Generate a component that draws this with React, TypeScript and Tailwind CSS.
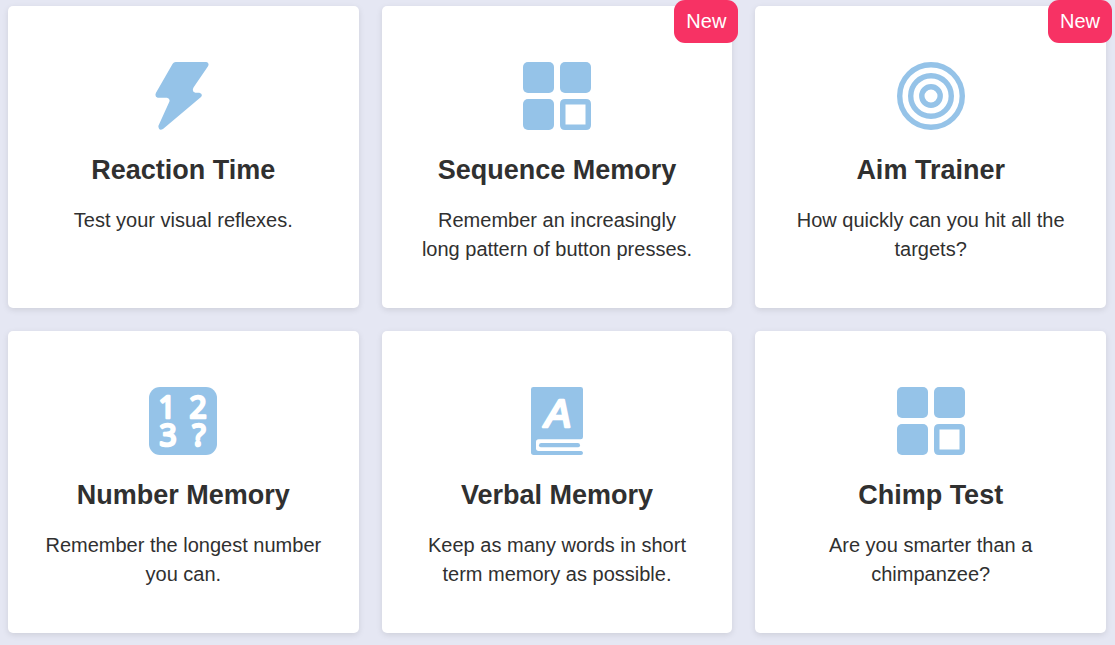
import type { ReactNode } from "react";

const BoltIcon = () => (
  <svg viewBox="30 36 204 204" className="size-[68px] text-[#95c3e8]" fill="currentColor" aria-hidden="true">
    <path d="M110 36H202Q212 38 207 49L164 112Q157 125 169 128H181Q193 132 186 141L72 237Q59 244 58 228L91 155Q94 145 84 143H56Q46 140 51 128L101 41Q104 36 110 36Z" />
  </svg>
);

const TilesIcon = () => (
  <svg viewBox="0 0 68 68" className="size-[68px] text-[#95c3e8]" fill="currentColor" aria-hidden="true">
    <rect width="31" height="31" rx="5" />
    <rect x="37" width="31" height="31" rx="5" />
    <rect y="37" width="31" height="31" rx="5" />
    <path fillRule="evenodd" d="M42 37H63Q68 37 68 42V63Q68 68 63 68H42Q37 68 37 63V42Q37 37 42 37ZM42.5 42.5V62.5H62.5V42.5Z" />
  </svg>
);

const TargetIcon = () => (
  <svg viewBox="0 0 68 68" className="size-[68px] text-[#95c3e8]" fill="none" stroke="currentColor" strokeWidth="5.4" aria-hidden="true">
    <circle cx="34" cy="34" r="31.3" />
    <circle cx="34" cy="34" r="20.3" />
    <circle cx="34" cy="34" r="9.2" />
  </svg>
);

const NumbersIcon = () => (
  <svg viewBox="0 0 68 68" className="size-[68px] overflow-visible text-[#95c3e8]" aria-hidden="true">
    <rect width="68" height="68" rx="11" fill="currentColor" />
    <g fill="white" stroke="white" strokeWidth="2.5" strokeLinejoin="round" textAnchor="middle" className="font-['Noto_Sans',sans-serif] text-[30px]">
      <text x="18" y="31">1</text>
      <text x="49" y="31">2</text>
      <text x="19" y="59">3</text>
      <text x="50" y="59">?</text>
    </g>
  </svg>
);

const BookIcon = () => (
  <svg viewBox="33 33 204 204" className="size-[68px] text-[#95c3e8]" aria-hidden="true">
    <path
      fill="currentColor"
      d="M64 33H206Q213 33 213 40V183Q213 190 206 190H80Q72 190 72 198V217Q72 225 80 225H208Q213 226 213 231Q213 237 207 237H65Q57 237 57 229V40Q57 33 64 33Z"
    />
    <rect x="81" y="201" width="123" height="13" rx="6.5" fill="currentColor" />
    <text
      x="138"
      y="153"
      textAnchor="middle"
      fill="white"
      stroke="white"
      strokeWidth="8"
      strokeLinejoin="round"
      className="font-['Liberation_Sans',Arial,sans-serif] text-[118px] italic"
    >
      A
    </text>
  </svg>
);

type Test = { title: string; text: string; icon: ReactNode; isNew?: boolean };

const tests: Test[] = [
  { title: "Reaction Time", text: "Test your visual reflexes.", icon: <BoltIcon /> },
  { title: "Sequence Memory", text: "Remember an increasingly long pattern of button presses.", icon: <TilesIcon />, isNew: true },
  { title: "Aim Trainer", text: "How quickly can you hit all the targets?", icon: <TargetIcon />, isNew: true },
  { title: "Number Memory", text: "Remember the longest number you can.", icon: <NumbersIcon /> },
  { title: "Verbal Memory", text: "Keep as many words in short term memory as possible.", icon: <BookIcon /> },
  { title: "Chimp Test", text: "Are you smarter than a chimpanzee?", icon: <TilesIcon /> },
];

function TestCard({ title, text, icon, isNew }: Test) {
  return (
    <a
      href="#"
      className="relative flex flex-col items-center rounded-[5px] bg-white px-9 pt-14 pb-11 text-center shadow-[0_2px_6px_rgba(0,0,0,0.1)]"
    >
      {icon}
      <h2 className="mt-[19px] text-[27px] leading-[42px] font-bold">{title}</h2>
      <p className="mt-[15px] text-[20px] leading-[29px]">{text}</p>
      {isNew && (
        <span className="absolute -top-1.5 -right-1.5 rounded-[11px] bg-[#f73264] px-3 py-[7px] text-[20px] leading-[29px] text-white">
          New
        </span>
      )}
    </a>
  );
}

export default function App() {
  return (
    <main className="min-h-screen bg-[#e5e7f3] pt-1.5 pr-[9px] pb-3 pl-2 font-['Liberation_Sans',Arial,sans-serif] text-[#303030]">
      <div className="grid auto-rows-fr grid-cols-3 gap-[23px]">
        {tests.map((test) => (
          <TestCard key={test.title} {...test} />
        ))}
      </div>
    </main>
  );
}
